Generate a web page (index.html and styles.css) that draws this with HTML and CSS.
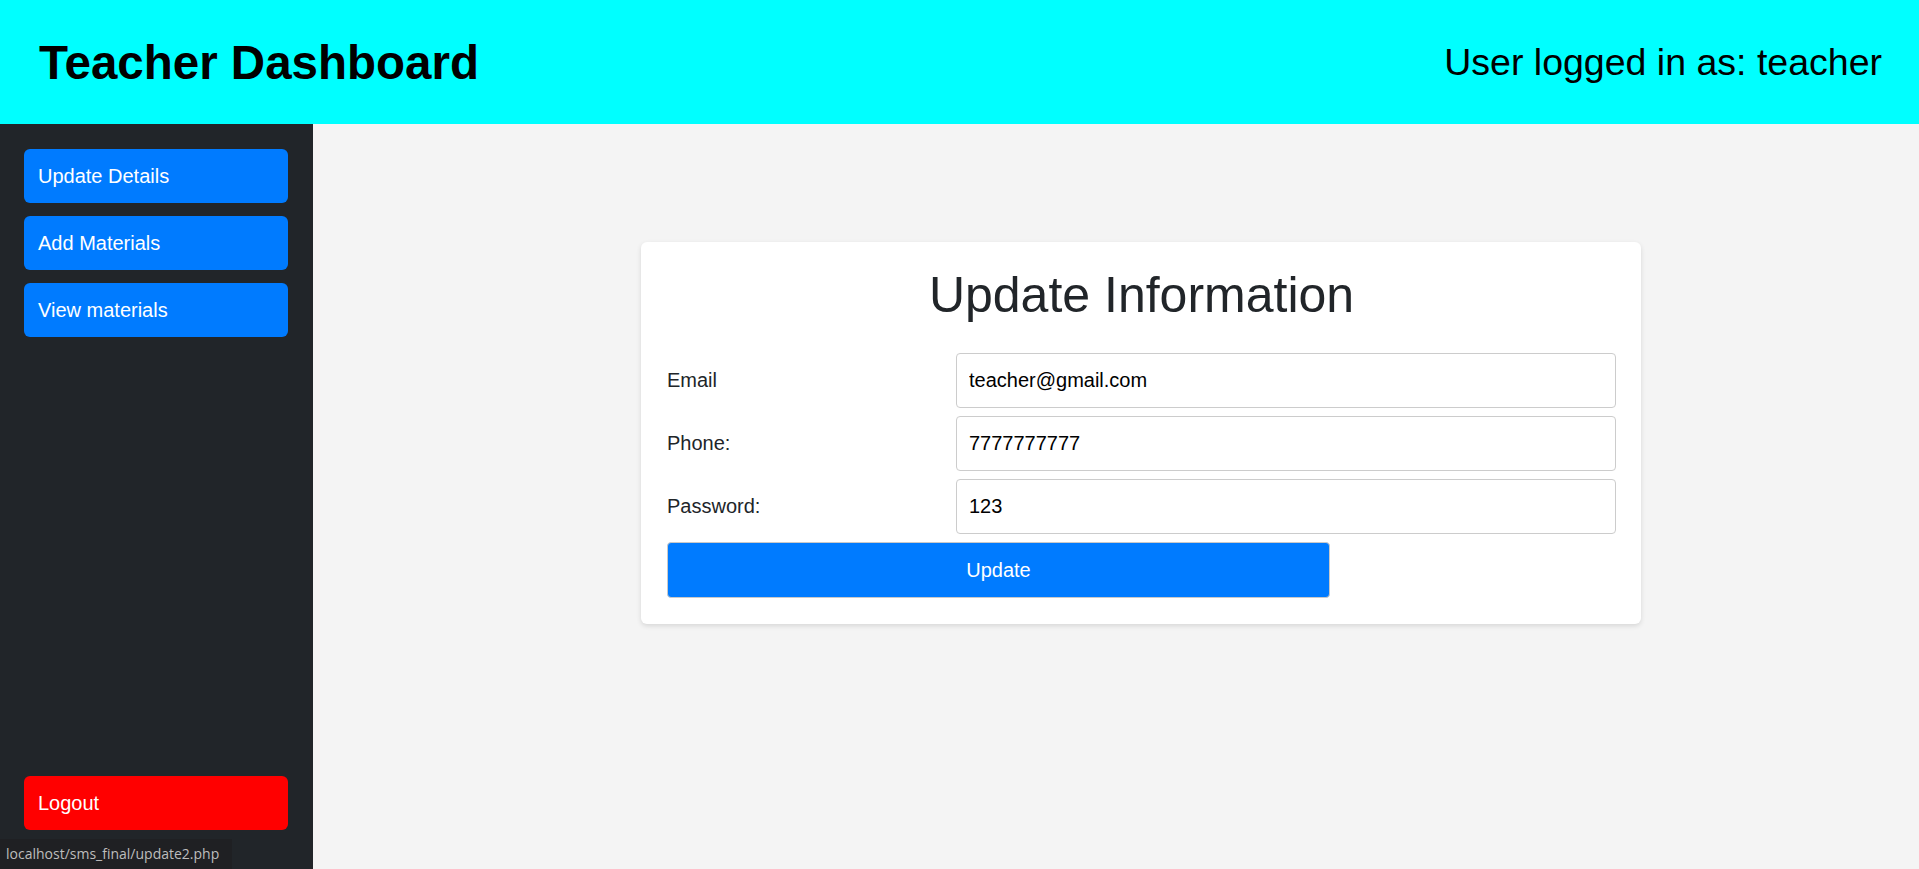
FILE: index.html
```html
<!DOCTYPE html>
<html lang="en">
<head>
<meta charset="utf-8">
<title>Teacher Dashboard</title>
<link rel="stylesheet" href="styles.css">
</head>
<body>
<header class="topbar">
  <h1 class="topbar-title">Teacher Dashboard</h1>
  <div class="topbar-user">User logged in as: teacher</div>
</header>
<div class="layout">
  <aside class="sidebar">
    <nav class="side-nav">
      <a class="side-btn" href="#">Update Details</a>
      <a class="side-btn" href="#">Add Materials</a>
      <a class="side-btn" href="#">View materials</a>
    </nav>
    <a class="side-btn logout" href="#">Logout</a>
  </aside>
  <main class="main">
    <section class="card">
      <h2 class="card-title">Update Information</h2>
      <form class="form">
        <label class="form-label" for="email">Email</label>
        <input class="form-input" id="email" type="text" value="teacher@gmail.com">
        <label class="form-label" for="phone">Phone:</label>
        <input class="form-input" id="phone" type="text" value="7777777777">
        <label class="form-label" for="pass">Password:</label>
        <input class="form-input" id="pass" type="text" value="123">
        <button class="submit-btn" type="button">Update</button>
      </form>
    </section>
  </main>
</div>
<div class="status-bar">localhost/sms_final/update2.php</div>
</body>
</html>
```

FILE: styles.css
```css
* { box-sizing: border-box; }
html, body { height: 100%; }
body {
  margin: 0;
  font-family: "Liberation Sans", Arial, sans-serif;
  display: flex;
  flex-direction: column;
  overflow: hidden;
}
.topbar {
  height: 124px;
  flex: 0 0 124px;
  background: #00ffff;
  display: flex;
  align-items: center;
  justify-content: space-between;
  padding: 0 37px 0 39px;
}
.topbar-title {
  margin: 0;
  font-size: 47.5px;
  font-weight: 700;
  color: #000;
}
.topbar-user {
  font-size: 37.5px;
  color: #000;
}
.layout {
  flex: 1;
  display: flex;
  min-height: 0;
}
.sidebar {
  width: 313px;
  flex: 0 0 313px;
  background: #212529;
  display: flex;
  flex-direction: column;
  justify-content: space-between;
  padding: 25px 25px 39px 24px;
}
.side-nav {
  display: flex;
  flex-direction: column;
  gap: 13px;
}
.side-btn {
  display: block;
  background: #007bff;
  color: #fff;
  text-decoration: none;
  font-size: 20px;
  line-height: 24px;
  padding: 15px 14px 15px 14px;
  border-radius: 6px;
}
.logout { background: #ff0000; }
.main {
  flex: 1;
  background: #f4f4f4;
  padding: 118px 0 0 50px;
}
.card {
  width: 1000px;
  margin: 0 auto;
  background: #fff;
  border-radius: 6px;
  box-shadow: 0 2px 5px rgba(0,0,0,0.12);
  padding: 25px 25px 26px 26px;
}
.card-title {
  margin: 0 0 29px;
  text-align: center;
  font-size: 50px;
  line-height: 57px;
  font-weight: 400;
  color: #212529;
}
.form {
  display: grid;
  grid-template-columns: 289px 1fr;
  row-gap: 8px;
  align-items: center;
}
.form-label {
  font-size: 20px;
  color: #212529;
}
.form-input {
  height: 55px;
  border: 1px solid #ccc;
  border-radius: 4px;
  padding: 0 12px;
  font-family: "Liberation Sans", Arial, sans-serif;
  font-size: 20px;
  color: #000;
  background: #fff;
}
.submit-btn {
  grid-column: 1 / span 2;
  width: 663px;
  height: 56px;
  background: #007bff;
  color: #fff;
  border: 1px solid #c9c9c9;
  border-radius: 4px;
  font-family: "Liberation Sans", Arial, sans-serif;
  font-size: 20px;
}
.status-bar {
  position: fixed;
  left: 0;
  bottom: 0;
  width: 232px;
  height: 30px;
  background: #1f2023;
  color: #bdbdbd;
  font-family: "Open Sans", sans-serif;
  font-size: 14px;
  line-height: 30px;
  padding: 0 6px;
  white-space: nowrap;
}
```
